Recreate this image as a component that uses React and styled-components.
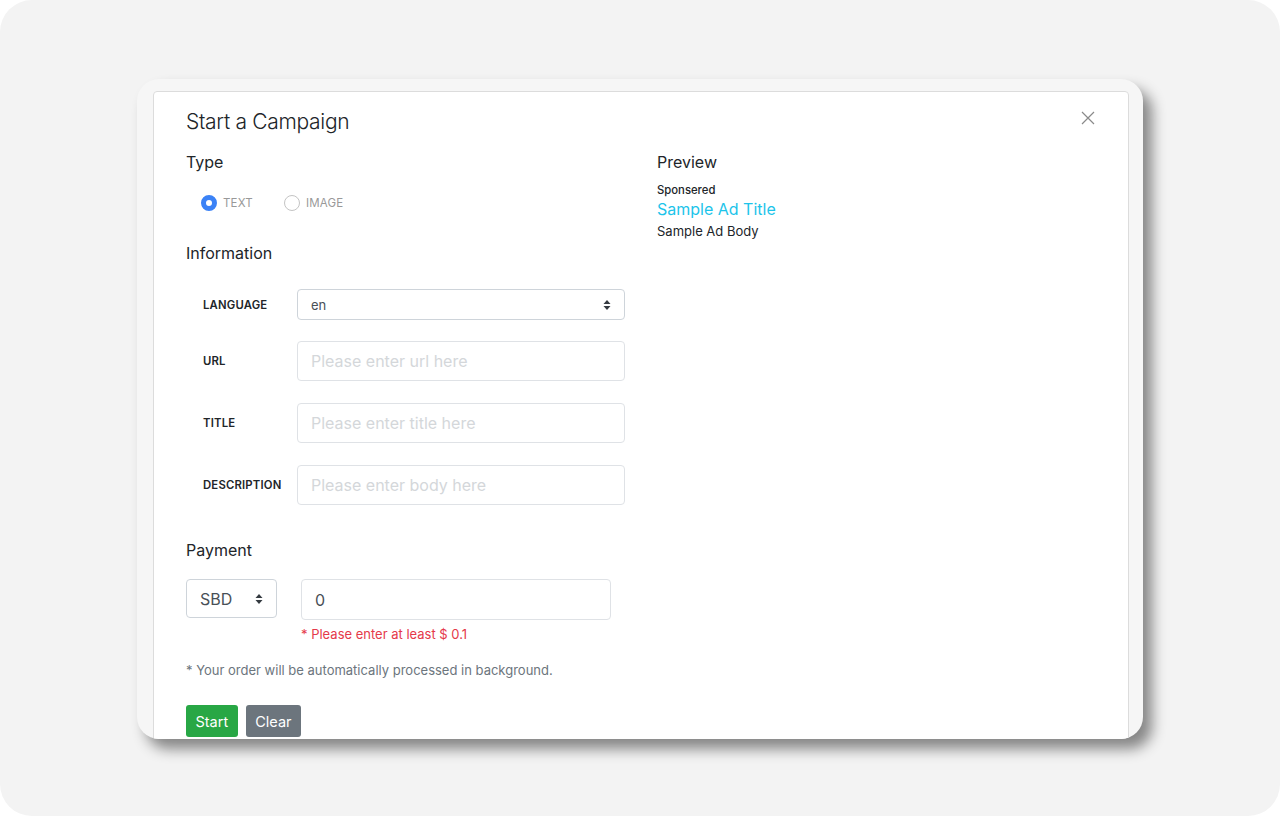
import styled, { createGlobalStyle } from "styled-components";

const Global = createGlobalStyle`
  html, body {
    margin: 0;
    padding: 0;
    background: #ffffff;
  }
  body {
    font-family: Inter, "Noto Sans", "Liberation Sans", sans-serif;
    color: #212529;
  }
`;

const UpDown = () => (
    <svg width="8" height="12" viewBox="0 0 8 12">
        <path d="M4 1 L7.5 5 L0.5 5 Z" fill="#343a40" />
        <path d="M4 11 L7.5 7 L0.5 7 Z" fill="#343a40" />
    </svg>
);

const App = () => {
    return <Frame>
        <Global />
        <Card>
            <Modal>
                <Header>
                    <Title>Start a Campaign</Title>
                    <Close aria-label="close">
                        <svg width="14" height="14" viewBox="0 0 14 14">
                            <path d="M1 1 L13 13 M13 1 L1 13" stroke="#8a8a8a" strokeWidth="1.2" />
                        </svg>
                    </Close>
                </Header>
                <Body>
                    <Column>
                        <Section>Type</Section>
                        <RadioRow>
                            <RadioItem>
                                <Radio checked />
                                <span>TEXT</span>
                            </RadioItem>
                            <RadioItem>
                                <Radio />
                                <span>IMAGE</span>
                            </RadioItem>
                        </RadioRow>

                        <Section top={28}>Information</Section>
                        <FormRow top={24}>
                            <Label>LANGUAGE</Label>
                            <Select>
                                <span>en</span>
                                <UpDown />
                            </Select>
                        </FormRow>
                        <FormRow top={21}>
                            <Label>URL</Label>
                            <Input placeholder="Please enter url here" />
                        </FormRow>
                        <FormRow top={22}>
                            <Label>TITLE</Label>
                            <Input placeholder="Please enter title here" />
                        </FormRow>
                        <FormRow top={22}>
                            <Label>DESCRIPTION</Label>
                            <Input placeholder="Please enter body here" />
                        </FormRow>

                        <Section top={33}>Payment</Section>
                        <PaymentRow>
                            <Currency>
                                <span>SBD</span>
                                <UpDown />
                            </Currency>
                            <AmountWrap>
                                <Amount defaultValue="0" />
                                <Error>* Please enter at least $ 0.1</Error>
                            </AmountWrap>
                        </PaymentRow>
                        <Note>* Your order will be automatically processed in background.</Note>
                        <Buttons>
                            <Button color="#28a745">Start</Button>
                            <Button color="#6c757d">Clear</Button>
                        </Buttons>
                    </Column>
                    <Column>
                        <Section>Preview</Section>
                        <Sponsored>Sponsered</Sponsored>
                        <AdTitle>Sample Ad Title</AdTitle>
                        <AdBody>Sample Ad Body</AdBody>
                    </Column>
                </Body>
            </Modal>
        </Card>
    </Frame>
}

const Frame = styled.div`
    height: 816px;
    background: #f3f3f3;
    border-radius: 32px;
    padding: 79px 0 0 137px;
    box-sizing: border-box;
`;

const Card = styled.div`
    width: 1006px;
    height: 660px;
    background: #f6f6f6;
    border-radius: 22px;
    overflow: hidden;
    padding: 12px 14px 0 16px;
    box-sizing: border-box;
    box-shadow: 9px 10px 14px rgba(0, 0, 0, 0.45);
`;

const Modal = styled.div`
    background: #fff;
    border: 1px solid #dcdcdc;
    border-radius: 4px 4px 0 0;
    height: 700px;
    padding: 0 32px;
`;

const Header = styled.div`
    display: flex;
    justify-content: space-between;
    align-items: flex-start;
    padding-top: 15px;
`;

const Title = styled.h5`
    margin: 0;
    font-size: 21px;
    line-height: 30px;
    font-weight: 300;
    letter-spacing: -0.3px;
    color: #212529;
`;

const Close = styled.button`
    border: none;
    background: none;
    padding: 0;
    margin: 4px 1px 0 0;
    width: 14px;
    height: 14px;
    display: flex;
`;

const Body = styled.div`
    display: grid;
    grid-template-columns: 440px 1fr;
    column-gap: 31px;
    margin-top: 13px;
`;

const Column = styled.div`
    display: flex;
    flex-direction: column;
`;

const Section = styled.div`
    font-size: 16px;
    line-height: 24px;
    color: #212529;
    margin-top: ${p => p.top || 0}px;
`;

const RadioRow = styled.div`
    display: flex;
    gap: 31px;
    margin: 19px 0 0 15px;
    height: 20px;
    align-items: center;
`;

const RadioItem = styled.label`
    display: flex;
    align-items: center;
    gap: 6px;
    font-size: 11.5px;
    color: #999;
    letter-spacing: 0.2px;
`;

const Radio = styled.span`
    width: 16px;
    height: 16px;
    box-sizing: border-box;
    border-radius: 50%;
    background: #fff;
    border: ${p => p.checked ? "5px solid #3b82f6" : "1px solid #c4c4c4"};
`;

const FormRow = styled.div`
    display: flex;
    align-items: center;
    margin-top: ${p => p.top || 0}px;
`;

const Label = styled.div`
    width: 94px;
    padding-left: 17px;
    font-size: 11.3px;
    font-weight: 600;
    letter-spacing: 0.2px;
    color: #212529;
`;

const Select = styled.div`
    width: 328px;
    height: 31px;
    box-sizing: border-box;
    border: 1px solid #ced4da;
    border-radius: 4px;
    display: flex;
    align-items: center;
    justify-content: space-between;
    padding: 0 13px;
    font-size: 13px;
    color: #495057;
`;

const Input = styled.input`
    width: 328px;
    height: 40px;
    box-sizing: border-box;
    border: 1px solid #dfe2e6;
    border-radius: 4px;
    padding: 0 13px;
    font-family: inherit;
    font-size: 16px;
    color: #495057;
    outline: none;
    &::placeholder {
        color: #d4d7da;
    }
`;

const PaymentRow = styled.div`
    display: flex;
    gap: 24px;
    margin-top: 17px;
`;

const Currency = styled.div`
    width: 91px;
    height: 39px;
    box-sizing: border-box;
    border: 1px solid #ced4da;
    border-radius: 4px;
    display: flex;
    align-items: center;
    justify-content: space-between;
    padding: 0 13px;
    font-size: 16px;
    color: #495057;
`;

const AmountWrap = styled.div`
    display: flex;
    flex-direction: column;
`;

const Amount = styled.input`
    width: 310px;
    height: 41px;
    box-sizing: border-box;
    border: 1px solid #dfe2e6;
    border-radius: 4px;
    padding: 0 13px;
    font-family: inherit;
    font-size: 16px;
    color: #495057;
    outline: none;
`;

const Error = styled.div`
    margin-top: 5px;
    font-size: 13px;
    line-height: 18px;
    color: #e5394a;
`;

const Note = styled.div`
    margin-top: 17px;
    font-size: 13px;
    line-height: 20px;
    color: #6c757d;
`;

const Buttons = styled.div`
    display: flex;
    gap: 8px;
    margin-top: 25px;
`;

const Button = styled.button`
    height: 32px;
    padding: 0 9.5px;
    border: none;
    border-radius: 3px;
    background: ${p => p.color};
    color: #fff;
    font-family: inherit;
    font-size: 14.5px;
`;

const Sponsored = styled.div`
    margin-top: 8px;
    font-size: 11.3px;
    font-weight: 500;
    line-height: 16px;
    color: #212529;
`;

const AdTitle = styled.div`
    font-size: 16px;
    line-height: 22px;
    color: #1cc4ea;
`;

const AdBody = styled.div`
    font-size: 13px;
    line-height: 22px;
    color: #212529;
`;

export default App;
